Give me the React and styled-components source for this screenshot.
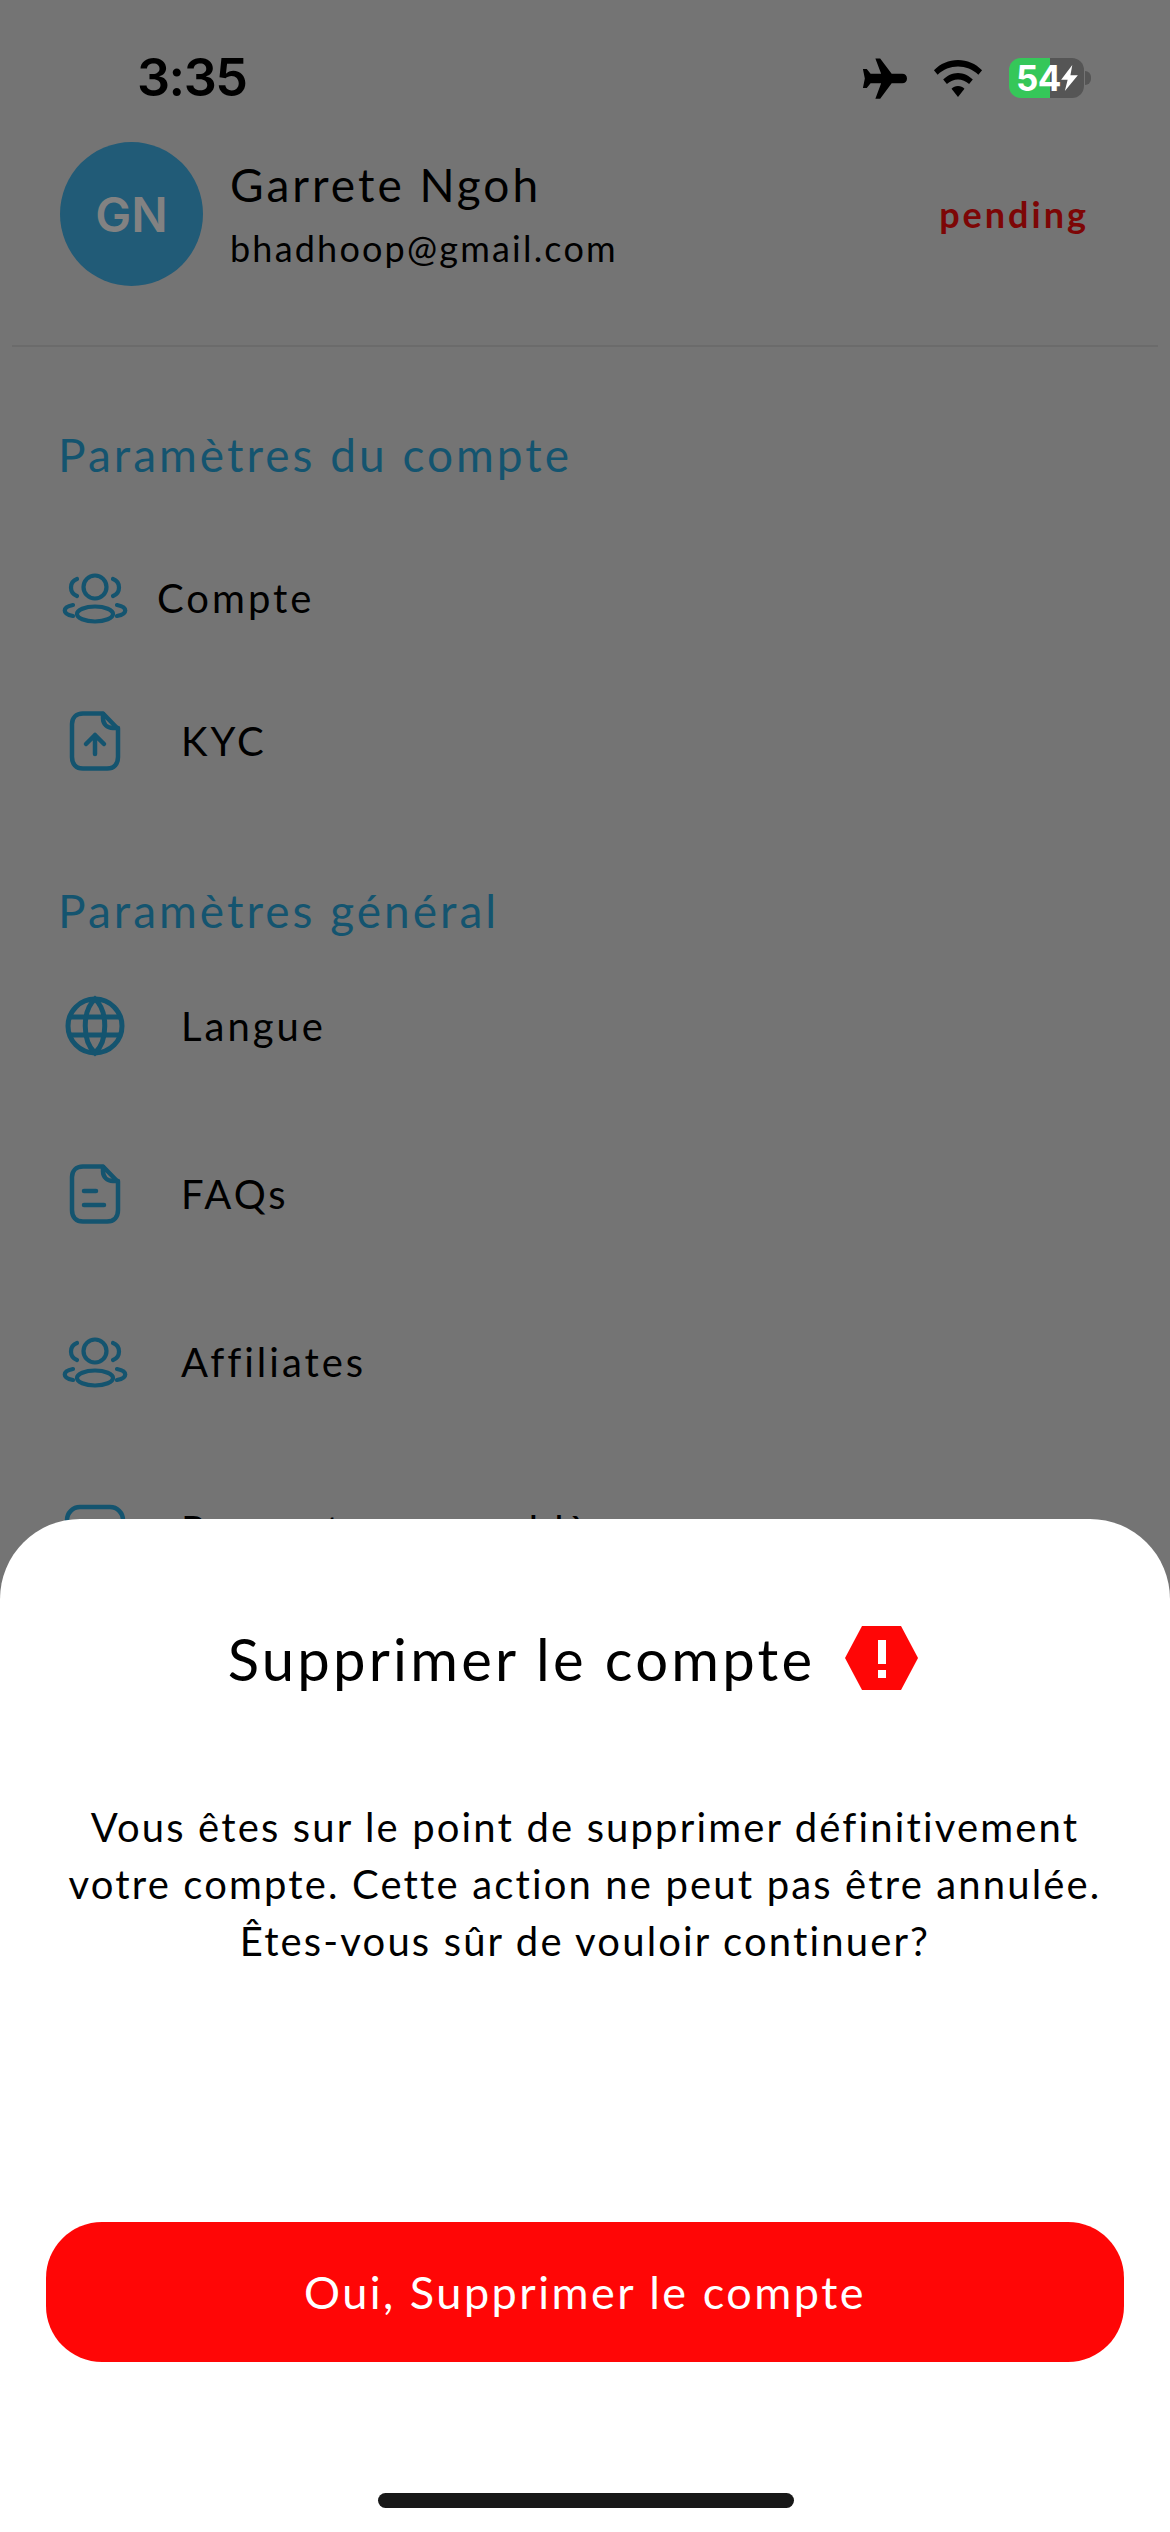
import React from 'react'
import styled, { createGlobalStyle } from 'styled-components'

const GlobalStyle = createGlobalStyle`
  html, body {
    margin: 0;
    padding: 0;
    background: #747474;
  }
  * {
    box-sizing: border-box;
  }
`

const Page = styled.div`
  position: relative;
  width: 1170px;
  height: 2532px;
  overflow: hidden;
  background: #747474;
  font-family: "Lato", "Noto Sans", sans-serif;
  color: #000;
`

const StatusBar = styled.div`
  height: 142px;
  padding: 48px 86px 0 137px;
  display: flex;
  justify-content: space-between;
  align-items: flex-start;
`

const Clock = styled.div`
  font-family: "Inter", sans-serif;
  font-weight: 600;
  font-size: 52px;
  line-height: 60px;
  letter-spacing: -1.5px;
`

const StatusIcons = styled.div`
  display: flex;
  align-items: center;
  gap: 26px;
  height: 60px;
`

const Battery = styled.div`
  position: relative;
  width: 75px;
  height: 40px;
  border-radius: 12px;
  background: linear-gradient(90deg, #35c759 0 41px, #555 41px);
  color: #fff;
  display: flex;
  align-items: center;
  padding-left: 7px;
  font-family: "Inter", sans-serif;
  font-weight: 700;
  font-size: 35px;
  letter-spacing: -0.5px;
  &::after {
    content: "";
    position: absolute;
    right: -7px;
    top: 13px;
    width: 6px;
    height: 14px;
    border-radius: 0 6px 6px 0;
    background: #555;
  }
`

const BoltIcon = styled.svg`
  position: absolute;
  left: 52px;
  top: 7px;
  width: 17px;
  height: 26px;
`

const Profile = styled.div`
  height: 203px;
  padding: 0 81px 0 60px;
  display: flex;
  align-items: flex-start;
`

const Avatar = styled.div`
  width: 143px;
  height: 144px;
  border-radius: 50%;
  background: #215b77;
  color: #828282;
  font-family: "Inter", sans-serif;
  font-weight: 600;
  font-size: 48px;
  display: flex;
  align-items: center;
  justify-content: center;
`

const ProfileText = styled.div`
  margin-left: 27px;
  flex: 1;
  padding-top: 14px;
`

const Name = styled.div`
  font-size: 46px;
  line-height: 58px;
  letter-spacing: 3px;
`

const Email = styled.div`
  font-size: 36px;
  line-height: 44px;
  margin-top: 12px;
  letter-spacing: 2.2px;
`

const Pending = styled.div`
  color: #7d0606;
  font-size: 36px;
  font-weight: 700;
  letter-spacing: 3px;
  margin-top: 50px;
`

const Divider = styled.div`
  height: 2px;
  margin: 0 12px;
  background: #6b6b6b;
`

const SectionTitle = styled.div`
  color: #14546f;
  font-size: 46px;
  line-height: 56px;
  letter-spacing: 3px;
  padding-left: 58px;
  margin-top: ${props => props.top}px;
`

const MenuRow = styled.div`
  height: 80px;
  margin-top: ${props => props.top}px;
  padding-left: 62px;
  display: flex;
  align-items: center;
`

const MenuIcon = styled.svg`
  width: 66px;
  height: 66px;
  flex: none;
  color: #14546f;
`

const MenuLabel = styled.div`
  font-size: 40px;
  letter-spacing: 3px;
  margin-left: ${props => props.gap}px;
`

const Sheet = styled.div`
  position: absolute;
  left: 0;
  right: 0;
  top: 1519px;
  bottom: 0;
  background: #fff;
  border-radius: 80px 80px 0 0;
  display: flex;
  flex-direction: column;
  align-items: center;
`

const SheetHeader = styled.div`
  display: flex;
  align-items: center;
  gap: 30px;
  margin-top: 108px;
  margin-right: 24px;
  height: 62px;
`

const SheetTitle = styled.div`
  font-size: 58px;
  letter-spacing: 3.2px;
  white-space: nowrap;
`

const Message = styled.p`
  margin: 110px 0 0;
  width: 1100px;
  text-align: center;
  font-size: 40px;
  line-height: 57px;
  letter-spacing: 2.15px;
  white-space: nowrap;
`

const DeleteButton = styled.div`
  margin-top: 252px;
  width: 1078px;
  height: 140px;
  border-radius: 56px;
  background: #ff0606;
  color: #fff;
  font-size: 45px;
  letter-spacing: 2.5px;
  display: flex;
  align-items: center;
  justify-content: center;
`

const HomeBar = styled.div`
  position: absolute;
  left: 378px;
  bottom: 24px;
  width: 416px;
  height: 15px;
  border-radius: 8px;
  background: #181818;
`

const PeopleIcon = () => (
  <MenuIcon viewBox="0 0 66 66" fill="none" stroke="currentColor" strokeWidth="4.2" strokeLinecap="round">
    <circle cx="33" cy="22" r="11.5" />
    <ellipse cx="33" cy="49" rx="18" ry="7.5" />
    <path d="M15 14c-8 3-8 14 0 17M51 14c8 3 8 14 0 17" />
    <path d="M11 40c-11 2-11 9 0 11M55 40c11 2 11 9 0 11" />
  </MenuIcon>
)

const FileUploadIcon = () => (
  <MenuIcon viewBox="0 0 66 66" fill="none" stroke="currentColor" strokeWidth="4.5" strokeLinecap="round" strokeLinejoin="round">
    <path d="M41 5.500H21C14 5.500 10 10 10 16v33c0 7 4 11.500 11 11.500h24c7 0 11-4.500 11-11.500V21L41 5.500z" />
    <path d="M41 6v4c0 6 4 10 10 10h5" />
    <path d="M33 46V27M24 36l9-9 9 9" />
  </MenuIcon>
)

const GlobeIcon = () => (
  <MenuIcon viewBox="0 0 66 66" fill="none" stroke="currentColor" strokeWidth="5">
    <circle cx="33" cy="33" r="27" />
    <path d="M33 6C20 18 20 48 33 60C46 48 46 18 33 6z" />
    <path d="M7 24h52M7 42h52" />
  </MenuIcon>
)

const FileTextIcon = () => (
  <MenuIcon viewBox="0 0 66 66" fill="none" stroke="currentColor" strokeWidth="4.5" strokeLinecap="round" strokeLinejoin="round">
    <path d="M41 5.500H21C14 5.500 10 10 10 16v33c0 7 4 11.500 11 11.500h24c7 0 11-4.500 11-11.500V21L41 5.500z" />
    <path d="M41 6v4c0 6 4 10 10 10h5" />
    <path d="M22 30h12M22 44h20" />
  </MenuIcon>
)

const ChatIcon = () => (
  <MenuIcon viewBox="0 0 66 66" fill="none" stroke="currentColor" strokeWidth="4.5">
    <rect x="5" y="10" width="56" height="46" rx="13" />
  </MenuIcon>
)

const App = () => (
  <Page>
    <GlobalStyle />
    <StatusBar>
      <Clock>3:35</Clock>
      <StatusIcons>
        <svg width="46" height="41" viewBox="0 0 48 42" fill="#000">
          <path d="M15 0h5l12 16h11c3 0 5 2 5 5s-2 5-5 5H32L20 42h-5l6-16H10l-4 5H2l2-10-2-10h4l4 5h11L15 0z" />
        </svg>
        <svg width="50" height="37" viewBox="0 0 52 40" fill="#000">
          <path d="M26 0c10 0 19 4 26 11l-4 5C42 10 34 7 26 7S10 10 4 16l-4-5C7 4 16 0 26 0z" />
          <path d="M26 14c6 0 12 3 16 7l-4 5c-3-3-8-5-12-5s-9 2-12 5l-4-5c4-4 10-7 16-7z" />
          <path d="M26 28c3 0 5 1 7 3l-7 9-7-9c2-2 4-3 7-3z" />
        </svg>
        <Battery>
          54
          <BoltIcon viewBox="0 0 18 28" fill="#fff">
            <path d="M12 0L0 16h7l-3 12 14-17h-8l2-11z" />
          </BoltIcon>
        </Battery>
      </StatusIcons>
    </StatusBar>
    <Profile>
      <Avatar>GN</Avatar>
      <ProfileText>
        <Name>Garrete Ngoh</Name>
        <Email>bhadhoop@gmail.com</Email>
      </ProfileText>
      <Pending>pending</Pending>
    </Profile>
    <Divider />
    <SectionTitle top={80}>Paramètres du compte</SectionTitle>
    <MenuRow top={75}>
      <PeopleIcon />
      <MenuLabel gap={29}>Compte</MenuLabel>
    </MenuRow>
    <MenuRow top={63}>
      <FileUploadIcon />
      <MenuLabel gap={53}>KYC</MenuLabel>
    </MenuRow>
    <SectionTitle top={102}>Paramètres général</SectionTitle>
    <MenuRow top={47}>
      <GlobeIcon />
      <MenuLabel gap={53}>Langue</MenuLabel>
    </MenuRow>
    <MenuRow top={88}>
      <FileTextIcon />
      <MenuLabel gap={53}>FAQs</MenuLabel>
    </MenuRow>
    <MenuRow top={88}>
      <PeopleIcon />
      <MenuLabel gap={53}>Affiliates</MenuLabel>
    </MenuRow>
    <MenuRow top={88}>
      <ChatIcon />
      <MenuLabel gap={53}>Rapporter un problème</MenuLabel>
    </MenuRow>
    <Sheet>
      <SheetHeader>
        <SheetTitle>Supprimer le compte</SheetTitle>
        <svg width="73" height="64" viewBox="0 0 73 64">
          <path fill="#ff0606" d="M17 0h39l17 32-17 32H17L0 32z" />
          <rect x="33" y="14" width="8" height="24" fill="#fff" />
          <rect x="33" y="44" width="8" height="8" fill="#fff" />
        </svg>
      </SheetHeader>
      <Message>
        Vous êtes sur le point de supprimer définitivement<br />
        votre compte. Cette action ne peut pas être annulée.<br />
        Êtes-vous sûr de vouloir continuer?
      </Message>
      <DeleteButton>Oui, Supprimer le compte</DeleteButton>
      <HomeBar />
    </Sheet>
  </Page>
)

export default App
